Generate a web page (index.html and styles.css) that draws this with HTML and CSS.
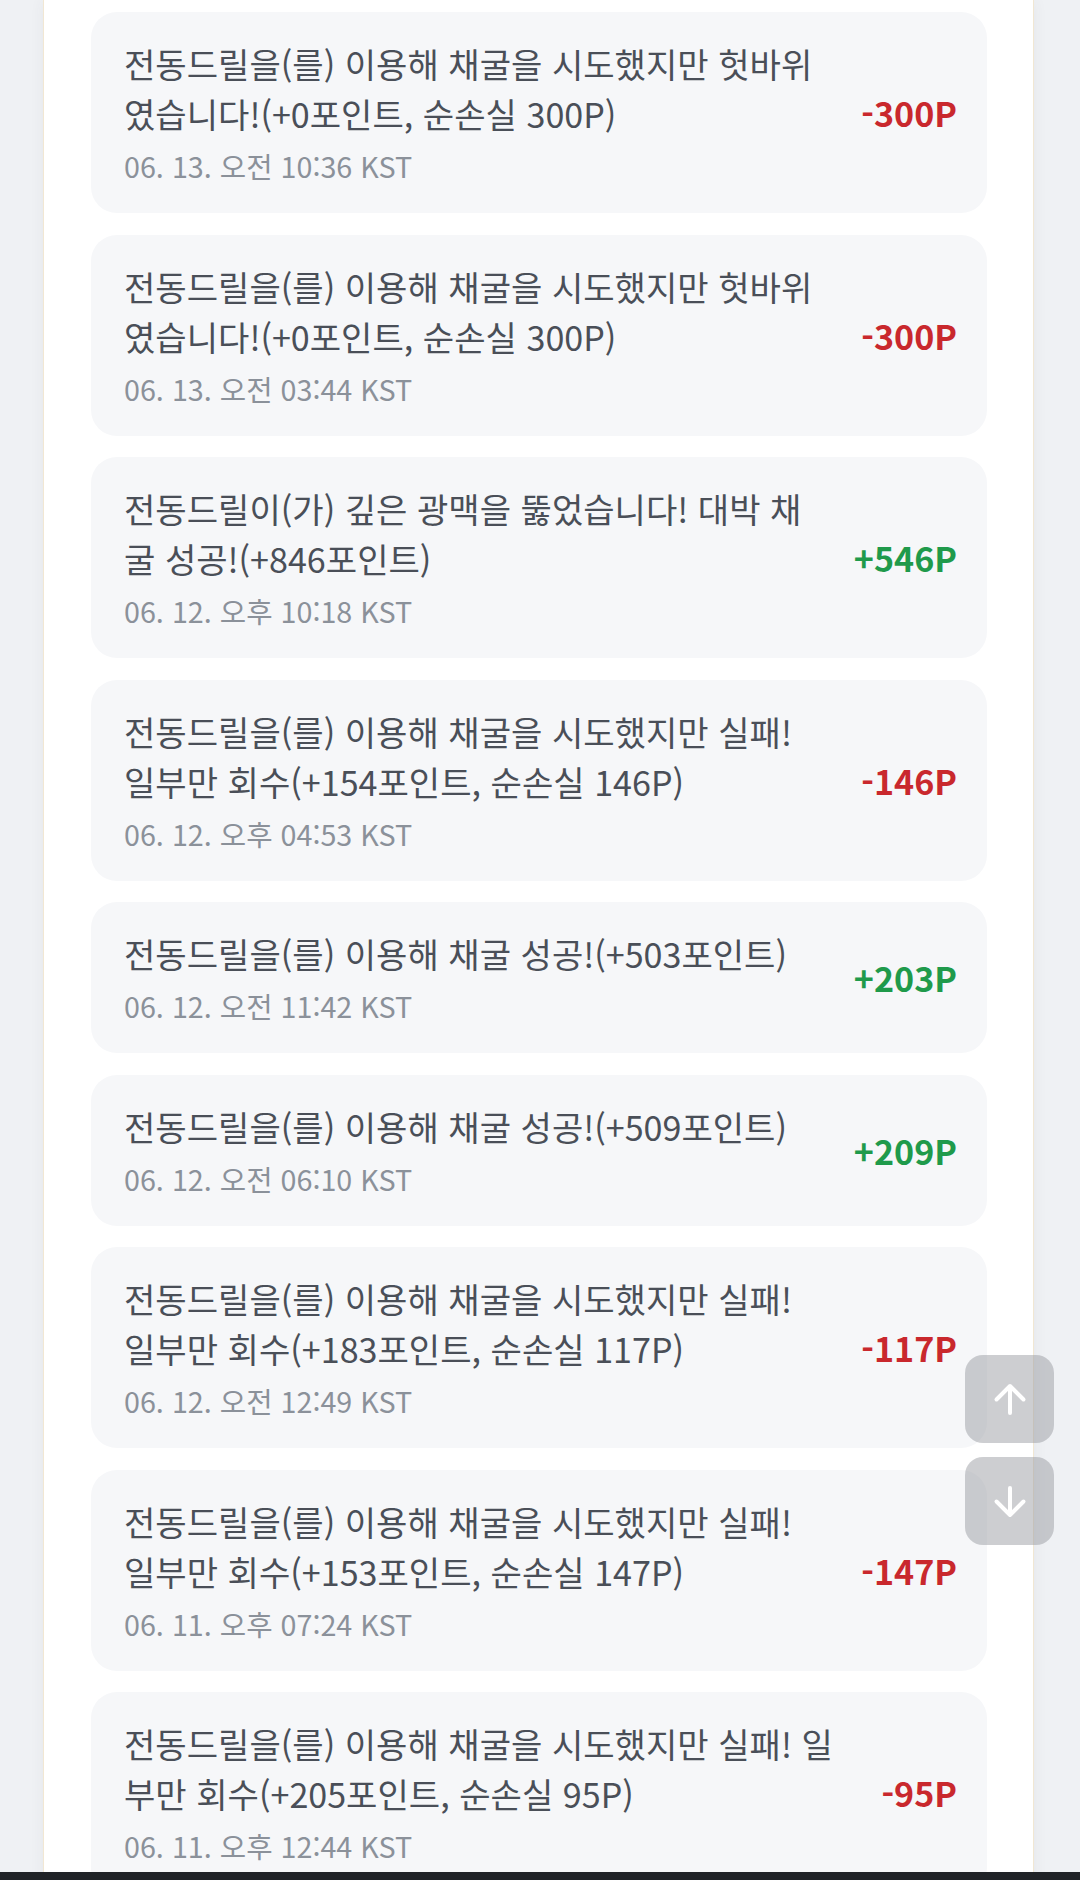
FILE: index.html
```html
<!DOCTYPE html>
<html lang="ko">
<head>
<meta charset="utf-8">
<title>포인트 내역</title>
<link rel="stylesheet" href="styles.css">
</head>
<body>
<div class="screen">
  <div class="panel">
    <ul class="list">
      <li class="item">
        <div class="info">
          <p class="desc">전동드릴을(를) 이용해 채굴을 시도했지만 헛바위였습니다!(+0포인트, 순손실 300P)</p>
          <p class="date">06. 13. 오전 10:36 KST</p>
        </div>
        <span class="amount minus">-300P</span>
      </li>
      <li class="item">
        <div class="info">
          <p class="desc">전동드릴을(를) 이용해 채굴을 시도했지만 헛바위였습니다!(+0포인트, 순손실 300P)</p>
          <p class="date">06. 13. 오전 03:44 KST</p>
        </div>
        <span class="amount minus">-300P</span>
      </li>
      <li class="item">
        <div class="info">
          <p class="desc">전동드릴이(가) 깊은 광맥을 뚫었습니다! 대박 채굴 성공!(+846포인트)</p>
          <p class="date">06. 12. 오후 10:18 KST</p>
        </div>
        <span class="amount plus">+546P</span>
      </li>
      <li class="item">
        <div class="info">
          <p class="desc">전동드릴을(를) 이용해 채굴을 시도했지만 실패! 일부만 회수(+154포인트, 순손실 146P)</p>
          <p class="date">06. 12. 오후 04:53 KST</p>
        </div>
        <span class="amount minus">-146P</span>
      </li>
      <li class="item">
        <div class="info">
          <p class="desc">전동드릴을(를) 이용해 채굴 성공!(+503포인트)</p>
          <p class="date">06. 12. 오전 11:42 KST</p>
        </div>
        <span class="amount plus">+203P</span>
      </li>
      <li class="item">
        <div class="info">
          <p class="desc">전동드릴을(를) 이용해 채굴 성공!(+509포인트)</p>
          <p class="date">06. 12. 오전 06:10 KST</p>
        </div>
        <span class="amount plus">+209P</span>
      </li>
      <li class="item">
        <div class="info">
          <p class="desc">전동드릴을(를) 이용해 채굴을 시도했지만 실패! 일부만 회수(+183포인트, 순손실 117P)</p>
          <p class="date">06. 12. 오전 12:49 KST</p>
        </div>
        <span class="amount minus">-117P</span>
      </li>
      <li class="item">
        <div class="info">
          <p class="desc">전동드릴을(를) 이용해 채굴을 시도했지만 실패! 일부만 회수(+153포인트, 순손실 147P)</p>
          <p class="date">06. 11. 오후 07:24 KST</p>
        </div>
        <span class="amount minus">-147P</span>
      </li>
      <li class="item">
        <div class="info">
          <p class="desc">전동드릴을(를) 이용해 채굴을 시도했지만 실패! 일부만 회수(+205포인트, 순손실 95P)</p>
          <p class="date">06. 11. 오후 12:44 KST</p>
        </div>
        <span class="amount minus">-95P</span>
      </li>
    </ul>
  </div>
  <div class="scroll-buttons">
    <button class="scroll-btn" type="button" aria-label="맨 위로">
      <svg width="34" height="33" viewBox="0 0 34 33"><path d="M17 3 V30 M3.5 16.5 L17 3 L30.5 16.5" fill="none" stroke="#fff" stroke-width="4" stroke-linecap="round" stroke-linejoin="round"/></svg>
    </button>
    <button class="scroll-btn" type="button" aria-label="맨 아래로">
      <svg width="34" height="33" viewBox="0 0 34 33"><path d="M17 3 V30 M3.5 16.5 L17 30 L30.5 16.5" fill="none" stroke="#fff" stroke-width="4" stroke-linecap="round" stroke-linejoin="round"/></svg>
    </button>
  </div>
</div>
<div class="navbar"></div>
</body>
</html>
```
FILE: styles.css
```css
html, body {
  margin: 0;
  padding: 0;
}
body {
  width: 1080px;
  height: 1880px;
  overflow: hidden;
  background: #eff1f4;
  font-family: "Noto Sans CJK KR", "Noto Sans", sans-serif;
}
.screen {
  height: 1872px;
  overflow: hidden;
}
.panel {
  width: 991px;
  margin-left: 43px;
  background: #ffffff;
  border-left: 1px solid #f1e7d3;
  border-right: 1px solid #f1e7d3;
  box-shadow: 0 0 14px rgba(60, 70, 90, 0.06);
  padding: 12px 46px 0 47px;
  box-sizing: border-box;
  min-height: 1872px;
}
.list {
  list-style: none;
  margin: 0;
  padding: 0;
  display: flex;
  flex-direction: column;
  gap: 21.5px;
}
.item {
  display: flex;
  align-items: center;
  gap: 42px;
  background: #f6f7f9;
  border-radius: 26px;
  padding: 26px 30px 29px 33px;
}
.info {
  flex: 1;
  min-width: 0;
}
.desc {
  margin: 0;
  font-size: 34.1px;
  line-height: 50px;
  color: #4a4f58;
}
.date {
  margin: 10px 0 0;
  font-size: 28.7px;
  line-height: 36px;
  color: #8b919a;
}
.amount {
  flex: none;
  font-size: 34.1px;
  font-weight: 700;
  line-height: 1;
  margin-top: 3px;
}
.minus {
  color: #c9282d;
}
.plus {
  color: #1f9a4b;
}
.scroll-buttons {
  position: fixed;
  top: 1355px;
  right: 26px;
  display: flex;
  flex-direction: column;
  gap: 14px;
}
.scroll-btn {
  width: 89px;
  height: 88px;
  border: none;
  border-radius: 18px;
  background: rgba(150, 153, 158, 0.48);
  display: flex;
  align-items: center;
  justify-content: center;
  padding: 0;
}
.navbar {
  height: 8px;
  background: #202327;
}
```
